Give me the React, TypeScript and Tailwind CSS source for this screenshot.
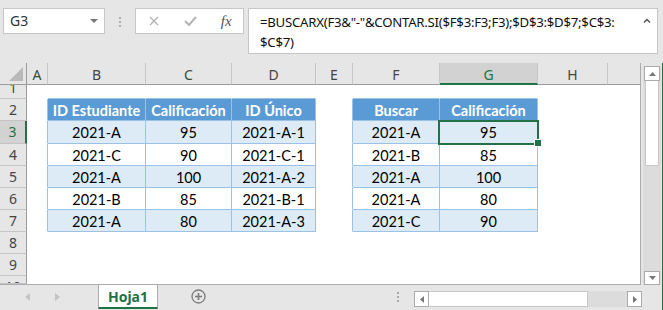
import React from 'react';

const UI = "font-['Noto_Sans',sans-serif]";
const CELLF = "font-['Lato',sans-serif]";

type Col = { k: string; w: string };
const COLS: Col[] = [
  { k: 'A', w: 'w-[21px]' },
  { k: 'B', w: 'w-[98px]' },
  { k: 'C', w: 'w-[86px]' },
  { k: 'D', w: 'w-[84px]' },
  { k: 'E', w: 'w-[37px]' },
  { k: 'F', w: 'w-[87px]' },
  { k: 'G', w: 'w-[98px]' },
  { k: 'H', w: 'w-[70px]' },
  { k: 'I', w: 'w-[32px]' },
];

const ROWS = [
  { n: 1, h: 'h-[14px]' },
  { n: 2, h: 'h-[22px]' },
  { n: 3, h: 'h-[23px]' },
  { n: 4, h: 'h-[22px]' },
  { n: 5, h: 'h-[22px]' },
  { n: 6, h: 'h-[22px]' },
  { n: 7, h: 'h-[22px]' },
  { n: 8, h: 'h-[22px]' },
  { n: 9, h: 'h-[22px]' },
  { n: 10, h: 'h-[8px]' },
];

const DATA: Record<number, Record<string, string>> = {
  2: { B: 'ID Estudiante', C: 'Calificación', D: 'ID Único', F: 'Buscar', G: 'Calificación' },
  3: { B: '2021-A', C: '95', D: '2021-A-1', F: '2021-A', G: '95' },
  4: { B: '2021-C', C: '90', D: '2021-C-1', F: '2021-B', G: '85' },
  5: { B: '2021-A', C: '100', D: '2021-A-2', F: '2021-A', G: '100' },
  6: { B: '2021-B', C: '85', D: '2021-B-1', F: '2021-A', G: '80' },
  7: { B: '2021-A', C: '80', D: '2021-A-3', F: '2021-C', G: '90' },
};

const TCOLS = ['B', 'C', 'D', 'F', 'G'];

function RowHeader({ n, h }: { n: number; h: string }) {
  const sel = n === 3;
  return (
    <div
      className={`${h} w-[27px] shrink-0 overflow-hidden flex justify-center ${n === 1 ? 'items-end' : 'items-start'} border-b border-b-[#c4c4c4] ${
        sel ? 'bg-[#d2d2d2] border-r-2 border-r-[#217346] text-[#217346]' : 'bg-[#e6e6e6] border-r border-r-[#9b9b9b] text-[#444]'
      }`}
    >
      <div className="h-[21px] shrink-0 flex items-center leading-none text-[14px] pt-[1px]">{n}</div>
    </div>
  );
}

function Cell({ r, c, w }: { r: number; c: string; w: string }) {
  const inT = r >= 2 && r <= 7 && TCOLS.includes(c);
  const blueR = inT || (r >= 2 && r <= 7 && (c === 'A' || c === 'E'));
  const blueB = inT || (r === 1 && TCOLS.includes(c));
  const bg = !inT ? 'bg-white' : r === 2 ? 'bg-[#5b9bd5]' : r % 2 === 1 ? 'bg-[#ddebf7]' : 'bg-white';
  const txt = DATA[r]?.[c];
  const sel = r === 3 && c === 'G';
  return (
    <div
      className={`${w} h-full shrink-0 relative border-r border-b flex items-center justify-center pt-[3px] ${CELLF} text-[14.5px] leading-none ${bg} ${
        blueR ? 'border-r-[#9bc2e6]' : 'border-r-white'
      } ${blueB ? 'border-b-[#9bc2e6]' : 'border-b-white'} ${r === 2 ? 'text-white font-bold' : 'text-black'}`}
    >
      {txt}
      {sel && (
        <>
          <div className="absolute z-10 left-[-2px] top-[-1px] w-[101px] h-[25px] border-2 border-[#217346]" />
          <div className="absolute z-10 left-[95px] top-[19px] w-[6px] h-[6px] bg-[#217346] outline outline-1 outline-white" />
        </>
      )}
    </div>
  );
}

function ColHeader({ k, w }: Col) {
  const sel = k === 'G';
  return (
    <div
      className={`${w} h-full shrink-0 flex items-center justify-center pt-[3px] text-[14px] leading-none ${
        k === 'I' ? '' : 'border-r border-r-[#c6c6c6]'
      } ${sel ? 'bg-[#d2d2d2] text-[#217346] border-b-2 border-b-[#217346]' : 'bg-[#e6e6e6] text-[#444] border-b border-b-[#9b9b9b]'}`}
    >
      {k === 'I' ? '' : k}
    </div>
  );
}

function Sheet() {
  return (
    <div className="w-[641px] h-[222px] shrink-0 flex flex-col border-r border-r-[#ababab] border-b border-b-[#ababab] overflow-hidden bg-white">
      <div className="h-[22px] flex shrink-0">
        <div className="w-[27px] h-full shrink-0 bg-[#e6e6e6] border-r border-r-[#9b9b9b] border-b border-b-[#9b9b9b] flex items-end justify-end pr-[3px] pb-[3px]">
          <svg width="14" height="14" viewBox="0 0 14 14">
            <polygon points="14,0 14,14 0,14" fill="#b9b9b9" />
          </svg>
        </div>
        {COLS.map((c) => (
          <ColHeader key={c.k} {...c} />
        ))}
      </div>
      {ROWS.map((row) => (
        <div key={row.n} className={`${row.h} flex shrink-0`}>
          <RowHeader n={row.n} h={row.h} />
          {COLS.map((c) => (
            <Cell key={c.k} r={row.n} c={c.k} w={c.w} />
          ))}
        </div>
      ))}
    </div>
  );
}

function VScroll() {
  return (
    <div className="w-[21px] h-[222px] shrink-0 bg-[#e6e6e6] flex pl-[2px] pt-[3px]">
      <div className="w-[18px] h-[219px] bg-[#dcdcdc] flex flex-col items-center">
        <div className="w-[16px] h-[15px] bg-white border border-[#ababab] flex items-center justify-center">
          <svg width="7" height="4" viewBox="0 0 7 4">
            <polygon points="0,4 7,4 3.5,0" fill="#777" />
          </svg>
        </div>
        <div className="w-[14px] h-[85px] bg-white border border-[#c8c8c8] border-t-0" />
        <div className="flex-1" />
        <div className="w-[16px] h-[14px] bg-white border border-[#ababab] flex items-center justify-center">
          <svg width="7" height="4" viewBox="0 0 7 4">
            <polygon points="0,0 7,0 3.5,4" fill="#777" />
          </svg>
        </div>
      </div>
    </div>
  );
}

function TabBar() {
  return (
    <div className={`h-[25px] w-[662px] shrink-0 bg-[#e6e6e6] flex items-start ${UI}`}>
      <div className="w-[98px] h-full flex items-center pl-[25px] gap-[25px] pb-[2px]">
        <svg width="5" height="8" viewBox="0 0 5 8">
          <polygon points="5,0 5,8 0,4" fill="#c3c3c3" />
        </svg>
        <svg width="5" height="8" viewBox="0 0 5 8">
          <polygon points="0,0 0,8 5,4" fill="#c3c3c3" />
        </svg>
      </div>
      <div className="w-[60px] h-[24px] bg-white border-l border-r border-[#ababab] border-b-2 border-b-[#217346] flex items-center justify-center text-[#217346] font-bold text-[14px] leading-none pt-[1px]">
        Hoja1
      </div>
      <div className="ml-[33px] h-[22px] flex items-center">
        <svg width="15" height="15" viewBox="0 0 15 15">
          <circle cx="7.5" cy="7.5" r="6.5" fill="none" stroke="#7a7a7a" strokeWidth="1.3" />
          <path d="M7.5 4 V11 M4 7.5 H11" stroke="#7a7a7a" strokeWidth="1.6" />
        </svg>
      </div>
      <div className="ml-[191px] h-[22px] flex flex-col items-center justify-center gap-[2px] pt-[2px]">
        <div className="w-[2px] h-[2px] bg-[#a8a8a8]" />
        <div className="w-[2px] h-[2px] bg-[#a8a8a8]" />
        <div className="w-[2px] h-[2px] bg-[#a8a8a8]" />
      </div>
      <div className="ml-[15px] mt-[6px] h-[16px] w-[228px] flex bg-[#dcdcdc]">
        <div className="w-[15px] h-full bg-white border border-[#ababab] flex items-center justify-center">
          <svg width="4" height="7" viewBox="0 0 4 7">
            <polygon points="4,0 4,7 0,3.5" fill="#777" />
          </svg>
        </div>
        <div className="w-[159px] h-full bg-white border border-[#c8c8c8] border-l-0" />
        <div className="flex-1" />
        <div className="w-[15px] h-full bg-white border border-[#ababab] flex items-center justify-center">
          <svg width="4" height="7" viewBox="0 0 4 7">
            <polygon points="0,0 0,7 4,3.5" fill="#777" />
          </svg>
        </div>
      </div>
    </div>
  );
}

function TopBar() {
  return (
    <div className={`h-[63px] w-[663px] shrink-0 bg-[#e6e6e6] flex items-start pt-[8px] pl-[3px] ${UI}`}>
      <div className="w-[102px] h-[26px] shrink-0 bg-white border border-[#c6c6c6] flex items-center justify-between pl-[6px] pr-[6px]">
        <span className="text-[14px] text-[#333] leading-none">G3</span>
        <svg width="8" height="4" viewBox="0 0 8 4">
          <polygon points="0,0 8,0 4,4" fill="#777" />
        </svg>
      </div>
      <div className="w-[30px] shrink-0 flex flex-col items-center gap-[2px] pt-[9px]">
        <div className="w-[2px] h-[2px] bg-[#b0b0b0]" />
        <div className="w-[2px] h-[2px] bg-[#b0b0b0]" />
        <div className="w-[2px] h-[2px] bg-[#b0b0b0]" />
      </div>
      <div className="w-[109px] h-[26px] shrink-0 bg-white border border-[#c6c6c6] flex items-center">
        <div className="w-[36px] flex justify-center">
          <svg width="10" height="10" viewBox="0 0 10 10">
            <path d="M1 1 L9 9 M9 1 L1 9" stroke="#b3b3b3" strokeWidth="1.4" />
          </svg>
        </div>
        <div className="w-[38px] flex justify-center">
          <svg width="13" height="10" viewBox="0 0 13 10">
            <path d="M1 5 L5 9 L12 1" stroke="#b3b3b3" strokeWidth="2" fill="none" />
          </svg>
        </div>
        <div className="w-[34px] flex justify-center">
          <span className="font-['Liberation_Serif',serif] italic text-[15px] text-[#555] leading-none">fx</span>
        </div>
      </div>
      <div className="ml-[4px] w-[410px] h-[46px] shrink-0 bg-white border border-[#c6c6c6] flex justify-between pl-[11px] pr-[6px] pt-[3px]">
        <div className="text-[13.2px] leading-[20px] text-[#111] tracking-[-0.25px] whitespace-nowrap">
          <div>{'=BUSCARX(F3&"-"&CONTAR.SI($F$3:F3;F3);$D$3:$D$7;$C$3:'}</div>
          <div>{'$C$7)'}</div>
        </div>
        <div className="pt-[6px]">
          <svg width="8" height="5" viewBox="0 0 8 5">
            <path d="M1 4.5 L4 1.5 L7 4.5" stroke="#555" strokeWidth="1.5" fill="none" />
          </svg>
        </div>
      </div>
    </div>
  );
}

export default function App() {
  return (
    <div className={`w-[663px] h-[310px] overflow-hidden flex flex-col bg-[#e6e6e6] ${UI}`}>
      <TopBar />
      <div className="flex h-[247px]">
        <div className="flex flex-col w-[662px]">
          <div className="flex h-[222px]">
            <Sheet />
            <VScroll />
          </div>
          <TabBar />
        </div>
        <div className="w-[1px] h-full bg-[#217346]" />
      </div>
    </div>
  );
}
